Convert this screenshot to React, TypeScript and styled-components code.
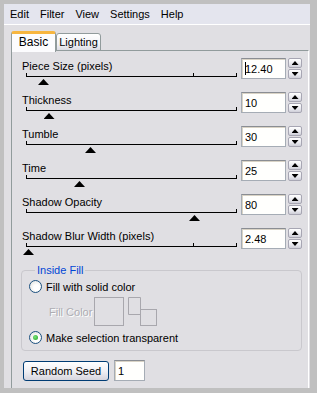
import React from "react";
import styled, { createGlobalStyle } from "styled-components";

const Global = createGlobalStyle`
  html, body { margin: 0; padding: 0; background: #c0c0c0; }
  body {
    font-family: "Liberation Sans", Arial, sans-serif;
    font-size: 11px;
    color: #000;
  }
  * { box-sizing: border-box; }
`;

const Frame = styled.div`
  width: 317px;
  height: 393px;
  padding: 4px 7px 5px 4px;
  background: #c0c0c0;
  display: flex;
`;

const Window = styled.div`
  flex: 1;
  background: #e0dfe3;
  display: flex;
  flex-direction: column;
  overflow: hidden;
`;

const MenuBar = styled.div`
  height: 21px;
  background: #e4e5ee;
  border-bottom: 1px solid #ffffff;
  display: flex;
  align-items: center;
  gap: 11px;
  padding-left: 6px;
`;

const MenuItem = styled.span`
  line-height: 20px;
`;

const Body = styled.div`
  flex: 1;
  display: flex;
  flex-direction: column;
  padding: 6px 1px 0 7px;
`;

const TabStrip = styled.div`
  display: flex;
  align-items: flex-end;
  height: 20px;
  position: relative;
  z-index: 1;
  margin-bottom: -1px;
`;

const Tab = styled.div<{ $active?: boolean }>`
  width: 45px;
  height: ${(p) => (p.$active ? "21px" : "18px")};
  margin-bottom: ${(p) => (p.$active ? "-1px" : "0")};
  border: 1px solid #919b9c;
  border-bottom: ${(p) => (p.$active ? "none" : "1px solid #919b9c")};
  border-top: ${(p) => (p.$active ? "3px solid #f7b640" : "1px solid #919b9c")};
  border-radius: 3px 3px 0 0;
  background: ${(p) =>
    p.$active ? "#fcfcfe" : "linear-gradient(#ffffff, #f3f3f7 60%, #dcdce4)"};
  display: flex;
  align-items: center;
  justify-content: center;
  padding-bottom: ${(p) => (p.$active ? "2px" : "0")};
  font-size: ${(p) => (p.$active ? "12px" : "11px")};
`;

const Panel = styled.div`
  flex: 1;
  border: 1px solid #919b9c;
  border-right-color: #ffffff;
  border-bottom: none;
  background: #e0dfe3;
  padding: 5px 6px 0 10px;
  display: flex;
  flex-direction: column;
`;

const Row = styled.div`
  display: flex;
  height: 34px;
  align-items: flex-start;
`;

const SliderCol = styled.div`
  width: 219px;
  display: flex;
  flex-direction: column;
`;

const Label = styled.div`
  margin-top: 3px;
  line-height: 14px;
  white-space: nowrap;
`;

const Track = styled.div`
  position: relative;
  margin-left: 4px;
  width: 211px;
  height: 4px;
  border: 1px solid #000;
  border-top: none;
`;

const MidTick = styled.span`
  position: absolute;
  top: 0;
  width: 1px;
  height: 3px;
  background: #000;
`;

const Thumb = styled.span`
  position: absolute;
  top: 6px;
  width: 11px;
  height: 6px;
  margin-left: -5px;
  background: #000;
  clip-path: polygon(50% 0, 100% 100%, 0 100%);
`;

const NumField = styled.div<{ $w?: number }>`
  width: ${(p) => p.$w ?? 45}px;
  height: 21px;
  margin-top: 2px;
  border: 1px solid #a5acb5;
  border-top-color: #8a8d93;
  background: #fffffd;
  box-shadow: inset 1px 1px 0 #d9d3c5;
  display: flex;
  align-items: center;
  padding-left: 3px;
  font-size: 11px;
`;

const Caret = styled.span`
  display: inline-block;
  width: 1px;
  height: 13px;
  background: #000;
  margin-right: -1px;
`;

const Spinner = styled.div`
  width: 14px;
  height: 21px;
  margin-top: 2px;
  margin-left: 2px;
  display: flex;
  flex-direction: column;
  gap: 1px;
`;

const SpinBtn = styled.div`
  flex: 1;
  border: 1px solid #a7a6b3;
  border-radius: 2px;
  background: linear-gradient(#ffffff, #e8e8ee 60%, #cfcfd8);
  display: flex;
  align-items: center;
  justify-content: center;
`;

const Arrow = styled.span<{ $down?: boolean }>`
  width: 7px;
  height: 4px;
  background: #000;
  clip-path: ${(p) =>
    p.$down ? "polygon(0 0, 100% 0, 50% 100%)" : "polygon(50% 0, 100% 100%, 0 100%)"};
`;

const Group = styled.fieldset`
  margin: 4px 0 0 -1px;
  padding: 3px 0 6px 7px;
  border: 1px solid #c9c8cd;
  border-radius: 4px;
  display: flex;
  flex-direction: column;
  min-width: 0;
`;

const Legend = styled.legend`
  margin-left: 6px;
  padding: 0 2px;
  color: #0046d5;
  line-height: 13px;
  font-size: 11px;
`;

const RadioRow = styled.label<{ $mt?: number }>`
  display: flex;
  align-items: center;
  gap: 4px;
  height: 13px;
  margin-top: ${(p) => p.$mt ?? 0}px;
`;

const RadioCircle = styled.span<{ $checked?: boolean }>`
  width: 13px;
  height: 13px;
  border-radius: 50%;
  border: 1px solid #1c5180;
  background: radial-gradient(circle at 60% 60%, #ffffff 30%, #dcdcd7 100%);
  display: flex;
  align-items: center;
  justify-content: center;
  &::after {
    content: "";
    display: ${(p) => (p.$checked ? "block" : "none")};
    width: 5px;
    height: 5px;
    border-radius: 50%;
    background: radial-gradient(circle at 40% 40%, #7be57b, #21a121);
  }
`;

const FillRow = styled.div`
  display: flex;
  align-items: center;
  margin-top: 4px;
  height: 29px;
`;

const DisabledText = styled.span`
  color: #aeadb3;
  text-shadow: 1px 1px 0 #ffffff;
  margin-left: 20px;
  width: 45px;
  white-space: nowrap;
`;

const ColorBox = styled.div`
  width: 30px;
  height: 29px;
  border: 1px solid #a8a7ad;
`;

const SwapIcon = styled.svg`
  margin-left: 4px;
  display: block;
`;

const BottomRow = styled.div`
  display: flex;
  align-items: center;
  gap: 5px;
  margin-top: 9px;
  margin-left: 1px;
`;

const Button = styled.div`
  width: 86px;
  height: 20px;
  border: 1px solid #003c74;
  border-radius: 3px;
  background: linear-gradient(#ffffff, #f0f0f4 50%, #d6d5de);
  display: flex;
  align-items: center;
  justify-content: center;
  font-size: 11px;
`;

type Slider = {
  label: string;
  value: string;
  pos: number;
  mid?: boolean;
  caret?: boolean;
};

const sliders: Slider[] = [
  { label: "Piece Size (pixels)", value: "12.40", pos: 16, mid: true, caret: true },
  { label: "Thickness", value: "10", pos: 21.5 },
  { label: "Tumble", value: "30", pos: 63 },
  { label: "Time", value: "25", pos: 52 },
  { label: "Shadow Opacity", value: "80", pos: 167 },
  { label: "Shadow Blur Width (pixels)", value: "2.48", pos: 1, mid: true },
];

export default function App() {
  return (
    <>
      <Global />
      <Frame>
        <Window>
          <MenuBar>
            <MenuItem>Edit</MenuItem>
            <MenuItem>Filter</MenuItem>
            <MenuItem>View</MenuItem>
            <MenuItem>Settings</MenuItem>
            <MenuItem>Help</MenuItem>
          </MenuBar>
          <Body>
            <TabStrip>
              <Tab $active>Basic</Tab>
              <Tab>Lighting</Tab>
            </TabStrip>
            <Panel>
              {sliders.map((s) => (
                <Row key={s.label}>
                  <SliderCol>
                    <Label>{s.label}</Label>
                    <Track>
                      {s.mid && <MidTick style={{ left: 166 }} />}
                      <Thumb style={{ left: s.pos }} />
                    </Track>
                  </SliderCol>
                  <NumField>
                    {s.caret && <Caret />}
                    {s.value}
                  </NumField>
                  <Spinner>
                    <SpinBtn>
                      <Arrow />
                    </SpinBtn>
                    <SpinBtn>
                      <Arrow $down />
                    </SpinBtn>
                  </Spinner>
                </Row>
              ))}
              <Group>
                <Legend>Inside Fill</Legend>
                <RadioRow>
                  <RadioCircle />
                  Fill with solid color
                </RadioRow>
                <FillRow>
                  <DisabledText>Fill Color</DisabledText>
                  <ColorBox />
                  <SwapIcon width="30" height="30" viewBox="0 0 30 30">
                    <path
                      d="M12.5 12.5 V0.5 H0.5 V17.5 H12.5"
                      fill="none"
                      stroke="#a8a7ad"
                      strokeWidth="1"
                    />
                    <rect x="12.5" y="12.5" width="16" height="16" fill="none" stroke="#a8a7ad" />
                  </SwapIcon>
                </FillRow>
                <RadioRow $mt={5}>
                  <RadioCircle $checked />
                  Make selection transparent
                </RadioRow>
              </Group>
              <BottomRow>
                <Button>Random Seed</Button>
                <NumField $w={31} style={{ marginTop: 0 }}>1</NumField>
              </BottomRow>
            </Panel>
          </Body>
        </Window>
      </Frame>
    </>
  );
}
